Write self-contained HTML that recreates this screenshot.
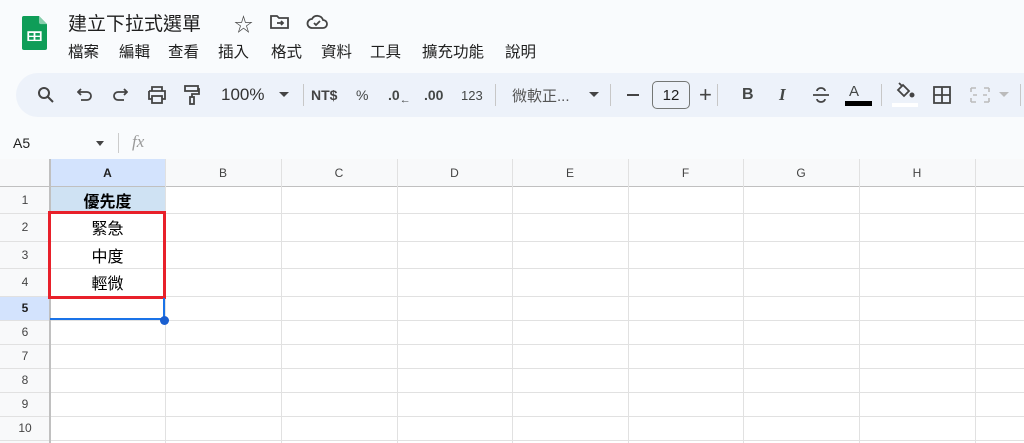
<!DOCTYPE html>
<html><head><meta charset="utf-8"><style>
*{margin:0;padding:0;box-sizing:border-box}
body{width:1024px;height:443px;overflow:hidden;background:#f9fbfd;font-family:"Liberation Sans","Noto Sans CJK TC",sans-serif;position:relative;color:#1f1f1f}
.a{position:absolute}
.menu span{white-space:nowrap}
.tb{position:absolute;top:73px;left:16px;width:1030px;height:44px;background:#edf2fa;border-radius:22px}
.ic{position:absolute;top:0;height:44px;display:flex;align-items:center;font-size:15px;color:#444746;white-space:nowrap}
.sep{position:absolute;top:84px;width:1px;height:22px;background:#c7c7c7}
.grid{position:absolute;top:159px;left:0;width:1024px;height:284px;background:#fff}
.hl{position:absolute;left:0;width:1024px;height:1px;background:#e1e1e1}
.vl{position:absolute;top:159px;width:1px;height:284px;background:#e1e1e1}
.ch{position:absolute;top:159px;height:27px;font-size:12px;color:#444;display:flex;align-items:center;justify-content:center}
.rh{position:absolute;left:0;width:50px;font-size:12px;color:#444;display:flex;align-items:center;justify-content:center}
.cell{position:absolute;left:50px;width:115px;font-size:16px;display:flex;align-items:center;justify-content:center;color:#000}
</style></head><body>
<svg class="a" style="left:22px;top:16px" width="25" height="34" viewBox="0 0 28 38"><path d="M2 0h17l9 9v27a2 2 0 0 1-2 2H2a2 2 0 0 1-2-2V2a2 2 0 0 1 2-2z" fill="#0f9d58"/><path d="M19 0l9 9h-7a2 2 0 0 1-2-2z" fill="#87ceac"/><rect x="6" y="17" width="16" height="11" fill="#fff"/><rect x="8" y="19" width="5" height="3" fill="#0f9d58"/><rect x="15" y="19" width="5" height="3" fill="#0f9d58"/><rect x="8" y="23.5" width="5" height="3" fill="#0f9d58"/><rect x="15" y="23.5" width="5" height="3" fill="#0f9d58"/></svg>
<div class="a" style="left:68px;top:9px;font-size:19px;color:#1f1f1f">建立下拉式選單</div>
<div class="a" style="left:234px;top:10px;font-size:19px;color:#444">☆</div>
<svg class="a" style="left:270px;top:14px" width="20" height="16" viewBox="0 0 20 16" fill="none" stroke="#444" stroke-width="1.8"><path d="M1 2h6l2 2h9v10H1z"/><path d="M7 9h6M11 7l2 2-2 2"/></svg>
<svg class="a" style="left:306px;top:14px" width="22" height="16" viewBox="0 0 22 16" fill="none" stroke="#444" stroke-width="1.8"><path d="M6 14h11a4 4 0 0 0 0-8 6 6 0 0 0-11-1 4.5 4.5 0 0 0 0 9z"/><path d="M8 9l2 2 4-4"/></svg>
<div class="a menu" style="left:68px;top:40px;font-size:15.5px;color:#1f1f1f;width:600px">
<span class="a" style="left:0">檔案</span><span class="a" style="left:51px">編輯</span><span class="a" style="left:100px">查看</span><span class="a" style="left:150px">插入</span><span class="a" style="left:203px">格式</span><span class="a" style="left:253px">資料</span><span class="a" style="left:302px">工具</span><span class="a" style="left:354px">擴充功能</span><span class="a" style="left:437px">說明</span></div>
<div class="tb"></div>
<div class="a" style="top:73px;left:0;width:1024px;height:44px">
<svg class="a" style="left:37px;top:13px" width="18" height="18" viewBox="0 0 18 18" fill="none" stroke="#444" stroke-width="2"><circle cx="7" cy="7" r="5"/><path d="M11 11l5 5"/></svg>
<svg class="a" style="left:77px;top:14px" width="16" height="16" viewBox="0 0 16 16" fill="none" stroke="#444" stroke-width="1.8"><path d="M4 2L1 5l3 3M1 5h9a4 4 0 0 1 0 8H4"/></svg>
<svg class="a" style="left:112px;top:14px" width="16" height="16" viewBox="0 0 16 16" fill="none" stroke="#444" stroke-width="1.8"><path d="M12 2l3 3-3 3M15 5H6a4 4 0 0 0 0 8h6"/></svg>
<svg class="a" style="left:147px;top:13px" width="20" height="18" viewBox="0 0 20 18" fill="none" stroke="#444" stroke-width="1.8"><path d="M5 5V1h10v4M2 5h16v8h-3M5 13H2V5"/><rect x="5" y="10" width="10" height="7"/></svg>
<svg class="a" style="left:184px;top:12px" width="16" height="20" viewBox="0 0 16 20" fill="none" stroke="#444" stroke-width="1.8"><rect x="1" y="1" width="13" height="5"/><path d="M14 4h1v5H8v3"/><rect x="6" y="12" width="4" height="7"/></svg>
<div class="ic" style="left:221px;font-size:17px;color:#333">100%</div>
<div class="a" style="left:279px;top:19px;border-left:5px solid transparent;border-right:5px solid transparent;border-top:5px solid #444"></div>
<div class="ic" style="left:311px;font-size:14px;font-weight:bold;color:#444">NT$</div>
<div class="ic" style="left:356px;font-size:14px">%</div>
<div class="ic" style="left:388px;font-size:14px;font-weight:bold">.0<span style="font-size:11px;margin-top:10px">←</span></div>
<div class="ic" style="left:424px;font-size:14px;font-weight:bold">.00</div>
<div class="ic" style="left:461px;font-size:13px">123</div>
<div class="ic" style="left:512px;font-size:15px;color:#555">微軟正...</div>
<div class="a" style="left:589px;top:19px;border-left:5px solid transparent;border-right:5px solid transparent;border-top:5px solid #444"></div>
<div class="a" style="left:627px;top:21px;width:12px;height:2px;background:#444"></div>
<div class="a" style="left:652px;top:8px;width:38px;height:28px;border:1px solid #747775;border-radius:5px;font-size:15px;display:flex;align-items:center;justify-content:center;color:#1f1f1f">12</div>
<div class="ic" style="left:699px;font-size:22px;color:#444">+</div>
<div class="ic" style="left:742px;font-size:16px;font-weight:bold">B</div>
<div class="ic" style="left:779px;font-size:17px;font-style:italic;font-family:'Liberation Serif',serif;font-weight:bold">I</div>
<svg class="a" style="left:812px;top:13px" width="18" height="18" viewBox="0 0 18 18" fill="none" stroke="#444" stroke-width="1.8"><path d="M1 9h16M5 5a4 3 0 0 1 8 0M5 13a4 3 0 0 0 8 0"/></svg>
<div class="ic" style="left:849px;font-size:15px;height:36px">A</div>
<div class="a" style="left:845px;top:28px;width:27px;height:5px;background:#000"></div>
<svg class="a" style="left:895px;top:9px" width="20" height="18" viewBox="0 0 20 18" fill="none" stroke="#444" stroke-width="1.8"><path d="M4 1l3 3M3 8l5-5 6 6-5 5z"/><circle cx="17" cy="13" r="1.6" fill="#444"/></svg>
<div class="a" style="left:892px;top:30px;width:26px;height:4px;background:#fff"></div>
<svg class="a" style="left:933px;top:13px" width="18" height="18" viewBox="0 0 18 18" fill="none" stroke="#444" stroke-width="1.8"><rect x="1" y="1" width="16" height="16"/><path d="M9 1v16M1 9h16"/></svg>
<svg class="a" style="left:970px;top:13px" width="20" height="18" viewBox="0 0 20 18" fill="none" stroke="#bbb" stroke-width="1.6"><path d="M1 2h5M1 16h5M1 2v4M1 12v4M19 2h-5M19 16h-5M19 2v4M19 12v4M3 9h4M13 9h4"/></svg>
<div class="a" style="left:999px;top:19px;border-left:5px solid transparent;border-right:5px solid transparent;border-top:5px solid #bbb"></div>
</div>
<div class="sep" style="left:303px"></div><div class="sep" style="left:495px"></div><div class="sep" style="left:610px"></div><div class="sep" style="left:717px"></div><div class="sep" style="left:881px"></div><div class="sep" style="left:1020px"></div>
<div class="a" style="left:13px;top:135px;font-size:14px;color:#1f1f1f">A5</div>
<div class="a" style="left:96px;top:141px;border-left:4.5px solid transparent;border-right:4.5px solid transparent;border-top:5px solid #444"></div>
<div class="a" style="left:118px;top:133px;width:1px;height:20px;background:#ccc"></div>
<div class="a" style="left:132px;top:132px;font-size:17px;font-style:italic;color:#999;font-family:'Liberation Serif',serif">fx</div>
<div class="grid"></div>
<div class="a" style="left:0;top:159px;width:1024px;height:27px;background:#f8f9fa"></div>
<div class="a" style="left:50px;top:159px;width:115px;height:27px;background:#d3e3fd"></div>
<div class="a" style="left:0;top:186px;width:50px;height:257px;background:#f8f9fa"></div>
<div class="a" style="left:0;top:296px;width:50px;height:24px;background:#d3e3fd"></div>
<div class="a" style="left:50px;top:186px;width:115px;height:27px;background:#cfe2f3"></div>
<div class="hl" style="top:186px;background:#c0c0c0"></div>
<div class="hl" style="top:213px"></div><div class="hl" style="top:241px"></div><div class="hl" style="top:268px"></div><div class="hl" style="top:296px"></div><div class="hl" style="top:320px"></div><div class="hl" style="top:344px"></div><div class="hl" style="top:368px"></div><div class="hl" style="top:392px"></div><div class="hl" style="top:416px"></div><div class="hl" style="top:440px"></div>
<div class="vl" style="left:49px;width:2px;background:#c0c0c0"></div>
<div class="vl" style="left:165px"></div><div class="vl" style="left:281px"></div><div class="vl" style="left:397px"></div><div class="vl" style="left:512px"></div><div class="vl" style="left:628px"></div><div class="vl" style="left:743px"></div><div class="vl" style="left:859px"></div><div class="vl" style="left:975px"></div>
<div class="ch" style="left:50px;width:115px;font-weight:bold;color:#1f1f1f">A</div>
<div class="ch" style="left:165px;width:116px">B</div><div class="ch" style="left:281px;width:116px">C</div><div class="ch" style="left:397px;width:115px">D</div><div class="ch" style="left:512px;width:116px">E</div><div class="ch" style="left:628px;width:115px">F</div><div class="ch" style="left:743px;width:116px">G</div><div class="ch" style="left:859px;width:116px">H</div>
<div class="rh" style="top:186px;height:27px">1</div><div class="rh" style="top:213px;height:28px">2</div><div class="rh" style="top:241px;height:27px">3</div><div class="rh" style="top:268px;height:28px">4</div><div class="rh" style="top:296px;height:24px;font-weight:bold;color:#1f1f1f">5</div><div class="rh" style="top:320px;height:24px">6</div><div class="rh" style="top:344px;height:24px">7</div><div class="rh" style="top:368px;height:24px">8</div><div class="rh" style="top:392px;height:24px">9</div><div class="rh" style="top:416px;height:24px">10</div>
<div class="cell" style="top:186px;height:27px;font-weight:bold">優先度</div>
<div class="cell" style="top:213px;height:28px">緊急</div>
<div class="cell" style="top:241px;height:27px">中度</div>
<div class="cell" style="top:268px;height:28px">輕微</div>
<div class="a" style="left:48px;top:211px;width:118px;height:88px;border:3px solid #e8202a"></div>
<div class="a" style="left:50px;top:298px;width:115px;height:22px;border-right:2px solid #1a73e8;border-bottom:2px solid #1a73e8"></div>
<div class="a" style="left:160px;top:316px;width:9px;height:9px;border-radius:50%;background:#1a5fd0"></div>
</body></html>
